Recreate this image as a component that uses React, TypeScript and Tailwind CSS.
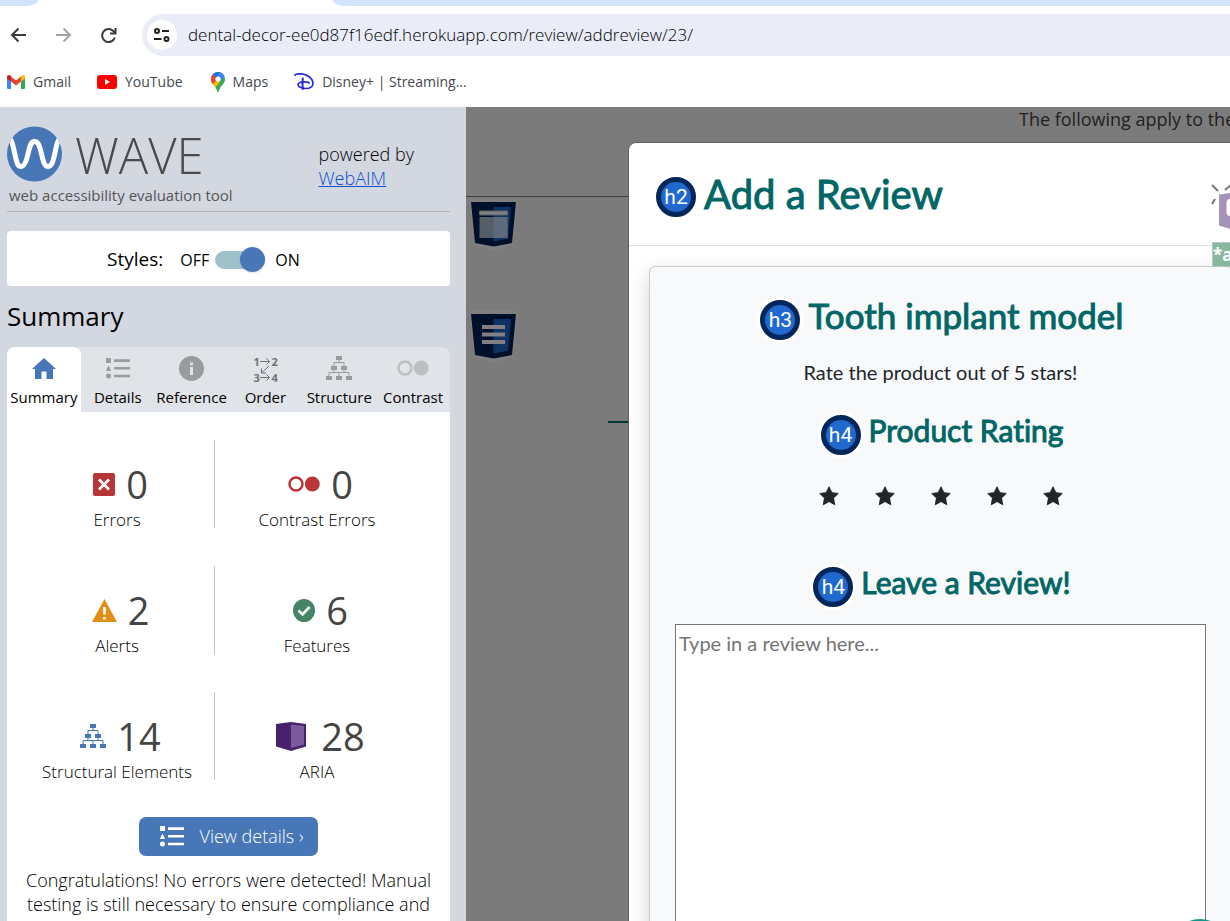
import React from "react";

const sans = "font-['Open_Sans','Noto_Sans',sans-serif]";
const lato = "font-['Lato',sans-serif]";

function GmailIcon() {
  return (
    <svg width="18" height="14" viewBox="0 0 18 14" aria-hidden="true">
      <path d="M0 2h4v12H1.3A1.3 1.3 0 0 1 0 12.7z" fill="#4285f4" />
      <path d="M14 2h4v10.7a1.3 1.3 0 0 1-1.3 1.3H14z" fill="#34a853" />
      <path d="M4 1.5 9 5.4l5-3.9v5L9 10.4 4 6.500z" fill="#ea4335" />
      <path d="M0 2C0 .2 2-.6 3.400.6L4 1.100v5.400L0 3.500z" fill="#c5221f" />
      <path d="M18 2c0-1.800-2-2.600-3.400-1.400l-.6.5v5.400l4-3z" fill="#fbbc04" />
    </svg>
  );
}

function YouTubeIcon() {
  return (
    <svg width="20" height="14" viewBox="0 0 20 14" aria-hidden="true">
      <rect width="20" height="14" rx="3" fill="#f00" />
      <path d="M8 4v6l5-3z" fill="#fff" />
    </svg>
  );
}

function MapsIcon() {
  return (
    <svg width="14" height="20" viewBox="0 0 14 20" aria-hidden="true">
      <defs>
        <clipPath id="pin">
          <path d="M7 0a7 7 0 0 1 7 7c0 4-3 6-4.700 8.500C8.200 17.200 7.800 20 7 20s-1.200-2.800-2.300-4.500C3 13 0 11 0 7a7 7 0 0 1 7-7z" />
        </clipPath>
      </defs>
      <g clipPath="url(#pin)">
        <path d="M0 0h14v20H0z" fill="#34a853" />
        <path d="M0 9.500 7 7l2 3-6 7-3-3z" fill="#fbbc04" />
        <path d="M0 0h3l4 7-5 5-3-1z" fill="#ea4335" />
        <path d="M2 1 9-1l3 3-5 5-4-3z" fill="#1a73e8" />
        <path d="M8 0l5 2 .5 3L9 9 6 6z" fill="#4285f4" />
      </g>
      <circle cx="7" cy="7" r="2.600" fill="#fff" />
    </svg>
  );
}

function DisneyIcon() {
  return (
    <svg width="20" height="17" viewBox="0 0 20 17" fill="none" stroke="#2626e0" strokeLinecap="round" aria-hidden="true">
      <path d="M1 2.200C1 .8 8 0 12.500 2.200 16.500 4.200 19 7.500 19 10.500c0 3.500-3.500 5-7 5-3.500 0-8-1.500-8-4 0-2.200 4-2.700 7.500-2.700 2 0 3.300.5 3.500 1.300" strokeWidth="1.700" />
      <path d="M8.800 5.500c-.4 3-.3 7.500.1 10.500" strokeWidth="2" />
    </svg>
  );
}

function WaveLogo() {
  return (
    <svg width="56" height="56" viewBox="0 0 56 56" aria-hidden="true">
      <defs>
        <clipPath id="disc"><circle cx="27.500" cy="28" r="27.500" /></clipPath>
      </defs>
      <g clipPath="url(#disc)">
        <path d="M0 0h56v56H0z" fill="#4777b6" />
        <path d="M-2 10C5 10 6 20 8 29s3 11.500 6 11.500 5-3.500 7-12.500 3-12.500 6.500-12.500S32.500 19 34.500 28s3.500 12.500 6.500 12.500 4.500-2.500 6.500-11.500 3-19 10-19" fill="none" stroke="#fff" strokeWidth="5" />
      </g>
    </svg>
  );
}

function ListIcon() {
  return (
    <svg width="24" height="21" viewBox="0 0 24 21" fill="currentColor" aria-hidden="true">
      <path d="M0 0h5v5H0zM2.500 7.500 5.200 13H-.2z" />
      <circle cx="2.500" cy="18" r="2.500" />
      <path d="M8 1.300h16v2.600H8zM8 9h16v2.600H8zM8 16.700h16v2.600H8z" />
    </svg>
  );
}

function HomeIcon() {
  return (
    <svg width="24" height="21" viewBox="0 0 24 21" fill="currentColor" aria-hidden="true">
      <path d="M12 0 24 11h-3v10h-6.500v-7.500h-5V21H3V11H0z" />
    </svg>
  );
}

function InfoIcon() {
  return (
    <svg width="25" height="25" viewBox="0 0 25 25" aria-hidden="true">
      <circle cx="12.500" cy="12.500" r="12.500" fill="currentColor" />
      <path d="M11 6.500h3v2.700h-3zM11 11h3v8h-3z" fill="#e0e3e8" />
    </svg>
  );
}

function OrderIcon() {
  return (
    <span className="grid h-6 w-6 grid-cols-[6px_12px_6px] text-[11px]/[12px] font-bold text-[#6f7173]">
      <span>1</span>
      <svg width="12" height="26" viewBox="0 0 12 26" className="row-span-2" fill="none" stroke="currentColor" aria-hidden="true">
        <path d="M1 5.500h9.500M7.500 2.500l3 3-3 3M10 10l-7 6.500M2.500 12.500v4.500H7M1 21.500h9.500M7.500 18.500l3 3-3 3" />
      </svg>
      <span>2</span>
      <span className="pt-1">3</span>
      <span className="pt-1">4</span>
    </span>
  );
}

function TreeIcon() {
  return (
    <svg width="26" height="24" viewBox="0 0 26 24" aria-hidden="true">
      <path d="M13 3v4M8 11V6.500h10V11M8 13v3.500M18 13v3.500M3 21v-4.500h20V21M13 16.500V21" fill="none" stroke="currentColor" />
      <path d="M10 0h6v4h-6zM5 10h6v4H5zM15 10h6v4h-6zM0 20h6v4H0zM10 20h6v4h-6zM20 20h6v4h-6z" fill="currentColor" />
    </svg>
  );
}

function ContrastIcon() {
  return (
    <svg width="32" height="16" viewBox="0 0 32 16" aria-hidden="true">
      <circle cx="8" cy="8" r="6.500" fill="none" stroke="currentColor" strokeWidth="2.500" />
      <circle cx="24.300" cy="8" r="7.500" fill="currentColor" />
    </svg>
  );
}

function ErrorIcon() {
  return (
    <svg width="22" height="23" viewBox="0 0 22 23" aria-hidden="true">
      <rect width="22" height="23" rx="2" fill="#b93638" />
      <path d="m6 6.500 10 10M16 6.500l-10 10" stroke="#fff" strokeWidth="2.800" />
    </svg>
  );
}

function AlertIcon() {
  return (
    <svg width="25" height="23" viewBox="0 0 25 23" aria-hidden="true">
      <path d="M12.500 0 25 23H0z" fill="#e28d16" />
      <path d="M11.200 8h2.600v7.500h-2.600zM11.200 18h2.600v2.500h-2.600z" fill="#fff" />
    </svg>
  );
}

function CheckIcon() {
  return (
    <svg width="22" height="23" viewBox="0 0 22 23" aria-hidden="true">
      <ellipse cx="11" cy="11.500" rx="11" ry="11.500" fill="#458464" />
      <path d="m5.500 11.500 4 4L16.500 8" fill="none" stroke="#fff" strokeWidth="2.600" />
    </svg>
  );
}

function AriaIcon() {
  return (
    <svg width="30" height="29" viewBox="0 0 30 29" aria-hidden="true">
      <path d="M0 2 15 0l15 2v22.500L15 29 0 24.500z" fill="#47216b" />
      <path d="M15 2.500 28 4v18.500L15 26z" fill="#7d5a9b" />
    </svg>
  );
}

function ShieldIcon({ kind }: { kind: "header" | "nav" }) {
  return (
    <svg width="49" height="52" viewBox="0 0 49 52" aria-hidden="true">
      <path d="M0 0h49l-5 46-19.500 6L5 46z" fill="#808080" />
      <path d="M2 3h45l-4 41L24.500 47.500 6 44z" fill="#00102b" />
      <path d="M24.500 8H42L39 39.500l-14.500 3.300z" fill="#0d3263" />
      {kind === "header" ? (
        <>
          <path d="M10.500 12h28v4h-28z" fill="#808080" stroke="#59616c" />
          <path d="M10.500 18h28v21h-28z" fill="#555d68" />
          <path d="M24.500 18h14v21h-14z" fill="#5c6a7c" />
        </>
      ) : (
        <path d="M13 14h23v4H13zM13 21.500h23v4H13zM13 29h23v4H13z" fill="#808080" />
      )}
    </svg>
  );
}

function Star() {
  return (
    <svg width="20" height="20" viewBox="0 0 20 20" fill="#212529" stroke="#212529" strokeLinejoin="round" aria-hidden="true">
      <path d="m10 .8 2.800 5.900 6.400.8-4.700 4.500 1.200 6.700L10 15.500l-5.700 3.200L5.500 12 .8 7.500l6.400-.8z" />
    </svg>
  );
}

function Level({ tag }: { tag: string }) {
  return (
    <span className="flex size-[46px] shrink-0 items-center justify-center rounded-full bg-white">
      <span className="flex size-[40px] items-center justify-center rounded-full border-5 border-[#00265a] bg-[#2069cf] pt-px font-['Roboto',sans-serif] text-[21px] leading-none text-white">
        {tag}
      </span>
    </span>
  );
}

const bookmarks = [
  { label: "Gmail", icon: <GmailIcon />, gap: "mr-[26px]" },
  { label: "YouTube", icon: <YouTubeIcon />, gap: "mr-[28px]" },
  { label: "Maps", icon: <MapsIcon />, gap: "mr-[26px]" },
  { label: "Disney+ | Streaming...", icon: <DisneyIcon />, gap: "" },
];

const tabs = [
  { label: "Summary", icon: <HomeIcon />, tone: "rounded-t-lg bg-white", ink: "text-[#4777b6]" },
  { label: "Details", icon: <ListIcon />, tone: "", ink: "text-[#999b9e]" },
  { label: "Reference", icon: <InfoIcon />, tone: "", ink: "text-[#999b9e]" },
  { label: "Order", icon: <OrderIcon />, tone: "", ink: "text-[#999b9e]" },
  { label: "Structure", icon: <TreeIcon />, tone: "", ink: "text-[#999b9e]" },
  { label: "Contrast", icon: <ContrastIcon />, tone: "", ink: "text-[#bdbfc2]" },
];

const stats = [
  { label: "Errors", count: 0, icon: <ErrorIcon />, ink: "" },
  { label: "Contrast Errors", count: 0, icon: <ContrastIcon />, ink: "text-[#b93638]" },
  { label: "Alerts", count: 2, icon: <AlertIcon />, ink: "" },
  { label: "Features", count: 6, icon: <CheckIcon />, ink: "" },
  { label: "Structural Elements", count: 14, icon: <TreeIcon />, ink: "text-[#4777b6]" },
  { label: "ARIA", count: 28, icon: <AriaIcon />, ink: "mr-1" },
];

function Browser() {
  return (
    <header className="shrink-0 bg-white">
      <div className="flex h-[6px] justify-between bg-white">
        <div className="w-[38px] rounded-br-[12px_6px] bg-[#d3e3fd]" />
        <div className="ml-[295px] flex-1 rounded-bl-[12px_6px] bg-[#d3e3fd]" />
      </div>
      <div className="flex h-[58px] items-center pl-[10px]">
        <button aria-label="Back" className="mr-[28px] text-[#3c3c3c]">
          <svg width="17" height="16" viewBox="0 0 17 16" fill="none" stroke="currentColor" strokeWidth="2"><path d="M16 8H2M8.500 1.500 2 8l6.500 6.500" /></svg>
        </button>
        <button aria-label="Forward" className="mr-[28px] text-[#a3a3a3]">
          <svg width="17" height="16" viewBox="0 0 17 16" fill="none" stroke="currentColor" strokeWidth="2"><path d="M1 8h14M8.500 1.500 15 8l-6.500 6.500" /></svg>
        </button>
        <button aria-label="Reload" className="mr-[25px] text-[#3c3c3c]">
          <svg width="17" height="17" viewBox="0 0 17 17" fill="none" stroke="currentColor" strokeWidth="2"><path d="M14.800 10.500A6.500 6.500 0 1 1 13.300 4L15.500 6M15.500 1v5.500H10" /></svg>
        </button>
        <div className="flex h-[42px] flex-1 items-center rounded-l-full bg-[#eaedf8] pl-[5px]">
          <button aria-label="Site information" className="flex size-[30px] items-center justify-center rounded-full bg-white">
            <svg width="16" height="14" viewBox="0 0 16 14" fill="none" stroke="#1f1f1f" strokeWidth="2"><circle cx="3" cy="3" r="2" /><path d="M8 3h7M0 11h7.500" /><circle cx="12.500" cy="11" r="2" /></svg>
          </button>
          <input
            aria-label="Address"
            defaultValue="dental-decor-ee0d87f16edf.herokuapp.com/review/addreview/23/"
            className="ml-[11px] w-full flex-1 bg-transparent text-[17px] font-light text-black outline-none"
          />
        </div>
      </div>
      <nav className="flex h-[43px] items-center pb-[8px] pl-[7px] text-[14px] text-[#45484c]">
        {bookmarks.map((b) => (
          <a key={b.label} href="#" className={`flex items-center gap-2 ${b.gap}`}>
            {b.icon}
            {b.label}
          </a>
        ))}
      </nav>
    </header>
  );
}

function Sidebar() {
  return (
    <aside className="flex w-[466px] shrink-0 flex-col overflow-hidden bg-[#d3d8e0] pr-4 pl-[7px] text-[#3d3d3d]">
      <div className="flex justify-between border-b border-[#b2b6bc] pt-[19px] pb-[3px]">
        <div>
          <div className="flex items-center gap-3">
            <WaveLogo />
            <span className="pt-[2px] text-[49px]/[54px] font-light text-[#4a4a4a]">WAVE</span>
          </div>
          <p className="pl-[2px] text-[15px]/[26px] text-[#555]">web accessibility evaluation tool</p>
        </div>
        <p className="pt-[16px] pr-[36px] text-[18px]/[24px] font-light text-black">
          powered by
          <br />
          <a href="#" className="text-[#0d4fcf] underline">WebAIM</a>
        </p>
      </div>

      <label className="mt-[19px] flex h-[55px] shrink-0 items-center rounded bg-white pt-[2px] pl-[100px] text-black">
        <span className="mr-[17px] text-[19px]">Styles:</span>
        <span className="text-[16px]">OFF</span>
        <span className="relative mx-[6px] flex w-[50px] items-center justify-end">
          <input type="checkbox" defaultChecked className="peer h-[18px] w-full appearance-none rounded-full bg-[#9fc1ca]" />
          <span className="pointer-events-none absolute right-0 size-[25px] rounded-full bg-[#4777b6] shadow" />
        </span>
        <span className="ml-[4px] text-[16px]">ON</span>
      </label>

      <h1 className="mt-[12px] mb-[13px] text-[26px]/[36px] text-black">Summary</h1>

      <div role="tablist" className="grid shrink-0 grid-cols-6 rounded-t-lg bg-[#e0e3e8] text-black">
        {tabs.map((t) => (
          <button key={t.label} role="tab" aria-selected={t.label === "Summary"} className={`flex h-[65px] flex-col items-center justify-between pt-[8px] pb-[5px] ${t.tone}`}>
            <span className={`flex h-[26px] items-center ${t.ink}`}>{t.icon}</span>
            <span className="text-[15px]/[20px]">{t.label}</span>
          </button>
        ))}
      </div>

      <section className="flex-1 bg-white pt-7">
        <div className="grid grid-cols-2 gap-y-[38px] pr-[33px] pl-[10px]">
          {stats.map((s, i) => (
            <div key={s.label} className={`flex h-[88px] flex-col items-center justify-end ${i % 2 ? "" : "mr-[2px] border-r border-[#c4c4c4] pl-[3px]"}`}>
              <div className="mb-[4px] flex items-center gap-[11px] pl-[7px]">
                <span className={s.ink}>{s.icon}</span>
                <span className="text-[38px]/[46px] text-[#444]">{s.count}</span>
              </div>
              <p className="text-[17px]/[17px] font-light text-black">{s.label}</p>
            </div>
          ))}
        </div>
        <div className="mt-[37px] flex justify-center">
          <button className="flex h-[39px] items-center gap-[16px] rounded-[7px] bg-[#4777b6] pr-[15px] pl-[21px] text-[18px] font-light text-white">
            <ListIcon />
            View details ›
          </button>
        </div>
        <p className="mt-[12px] px-3 text-center text-[18px]/[24px] font-light text-black">
          Congratulations! No errors were detected! Manual testing is still necessary to ensure compliance and
        </p>
      </section>
    </aside>
  );
}

const heading = "font-normal text-[#066] [-webkit-text-stroke:1px_#066] [font-variant-ligatures:none]";

function ReviewDialog() {
  return (
    <div role="dialog" aria-labelledby="dialog-title" className={`absolute top-[35px] -right-[23px] left-[162px] h-[1000px] rounded-tl-lg border border-[#606060] bg-white ${lato}`}>
      <div className="flex h-[103px] items-center border-b border-[#dee2e6] pt-[6px] pl-[24px]">
        <Level tag="h2" />
        <h2 id="dialog-title" className={`ml-[5px] pb-[6px] text-[40px]/[48px] ${heading}`}>Add a Review</h2>
      </div>
      <div className="m-5 flex h-full flex-col items-center rounded-md border border-[#c9cccf] bg-[#f8f9fb] px-[25px] pt-[25px] text-[#212529] shadow-[0_8px_20px_rgba(0,0,0,0.18)]">
        <div className="flex items-center gap-[5px] pt-[2px]">
          <Level tag="h3" />
          <h3 className={`pb-[8px] text-[35px]/[43px] ${heading}`}>Tooth implant model</h3>
        </div>
        <p className="mt-[12px] text-[20px]/[30px]">Rate the product out of 5 stars!</p>
        <div className="mt-[24px] flex items-center gap-[5px]">
          <Level tag="h4" />
          <h4 className={`pb-[8px] text-[30px]/[39px] ${heading}`}>Product Rating</h4>
        </div>
        <div className="mt-[28px] flex gap-9">
          {[1, 2, 3, 4, 5].map((n) => (
            <button key={n} aria-label={`${n} stars`}><Star /></button>
          ))}
        </div>
        <div className="mt-[57px] flex items-center gap-[5px]">
          <Level tag="h4" />
          <h4 className={`pb-[8px] text-[30px]/[39px] ${heading}`}>Leave a Review!</h4>
        </div>
        <textarea
          aria-label="Review"
          placeholder="Type in a review here..."
          className="mt-[14px] w-full flex-1 resize-none border border-[#767676] bg-white p-[3px] text-[20px]/[30px] placeholder:text-[#757575]"
        />
      </div>
      <div className="absolute top-[38px] right-0 flex w-[41px] flex-col">
        <svg width="41" height="52" viewBox="0 0 41 52" aria-hidden="true">
          <path d="m1 4 6 6M21 3l-7 6M1 23l3-5" stroke="#777" strokeWidth="2" />
          <path d="M8 13.500 25 11v39L8 44.500z" fill="#a492b8" />
          <rect x="15.500" y="18" width="15" height="17" rx="4" fill="#fff" />
        </svg>
      </div>
      <div className="absolute top-[99px] right-0 h-[25px] w-[40px] overflow-hidden border border-[#b5c7bd] bg-[#88b79f] font-['Open_Sans',sans-serif] text-[17px]/[23px] font-bold whitespace-nowrap text-white">
        *aria
      </div>
    </div>
  );
}

export default function App() {
  return (
    <div className={`flex h-screen flex-col overflow-hidden ${sans}`}>
      <Browser />
      <div className="flex min-h-0 flex-1">
        <Sidebar />
        <main className="relative min-w-0 flex-1 overflow-hidden bg-[#7b7b7b]">
          <div className="h-[90px] border-b border-[#3d423f]">
            <p className="ml-[553px] text-[18px]/[25px] whitespace-nowrap text-[#212121]">The following apply to the</p>
          </div>
          <div className="flex flex-col gap-[60px] pt-[2px] pl-[3px]">
            <ShieldIcon kind="header" />
            <ShieldIcon kind="nav" />
          </div>
          <div className="mt-[58px] ml-[142px] h-[2px] bg-[#003635]" />
          <ReviewDialog />
          <div className="absolute right-0 -bottom-[58px] size-[60px] rounded-full bg-[#14968c]" />
        </main>
      </div>
    </div>
  );
}
